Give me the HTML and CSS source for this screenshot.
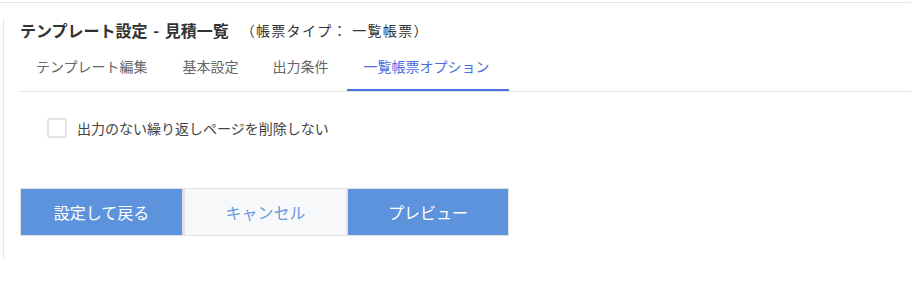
FILE: index.html
```html
<!DOCTYPE html>
<html lang="ja">
<head>
<meta charset="utf-8">
<link rel="stylesheet" href="styles.css">
</head>
<body>
<div class="topline"></div>
<div class="panel">
  <div class="title-row">
    <span class="title">テンプレート設定 - 見積一覧</span>
    <span class="subtitle">（帳票タイプ： 一覧帳票）</span>
  </div>
  <div class="tabs">
    <div class="tab">テンプレート編集</div>
    <div class="tab">基本設定</div>
    <div class="tab">出力条件</div>
    <div class="tab active">一覧帳票オプション</div>
  </div>
  <label class="check-row">
    <span class="checkbox"></span>
    <span class="check-label">出力のない繰り返しページを削除しない</span>
  </label>
  <div class="buttons">
    <button class="btn primary">設定して戻る</button>
    <button class="btn secondary">キャンセル</button>
    <button class="btn primary narrow">プレビュー</button>
  </div>
</div>
</body>
</html>
```

FILE: styles.css
```css
html, body {
  margin: 0;
  padding: 0;
  background: #ffffff;
}
body {
  font-family: "Noto Sans CJK JP", "Noto Sans", sans-serif;
  color: #333333;
}
.topline {
  margin-top: 2px;
  height: 0;
  border-top: 1px solid #e6e6e6;
}
.panel {
  margin-top: 15px;
  margin-left: 3px;
  border-left: 1px solid #e6e6e6;
  padding: 0 0 23px 16px;
}
.title-row {
  display: flex;
  align-items: center;
  height: 24px;
}
.title {
  font-size: 16px;
  font-weight: 700;
  color: #333333;
  line-height: 24px;
  word-spacing: 2px;
}
.subtitle {
  font-size: 14px;
  letter-spacing: 1.3px;
  margin-left: 12px;
  color: #333333;
  line-height: 24px;
}
.tabs {
  display: flex;
  border-bottom: 1px solid #e2e2e2;
}
.tab {
  font-size: 14px;
  line-height: 20px;
  padding: 14px 18px 13px 16px;
  border-bottom: 2px solid transparent;
  color: #666666;
}
.tab:first-child {
  padding-right: 19px;
}
.tab.active {
  color: #4a6ee0;
  border-bottom-color: #4a72e0;
  padding-left: 17px;
  padding-right: 19px;
}
.check-row {
  display: flex;
  align-items: center;
  margin: 26px 0 0 27px;
  height: 20px;
}
.checkbox {
  box-sizing: border-box;
  width: 20px;
  height: 20px;
  border: 2px solid #e4e4e4;
  border-radius: 2px;
  background: #fff;
}
.check-label {
  margin-left: 10px;
  font-size: 14px;
  color: #444444;
}
.buttons {
  display: flex;
  margin-top: 50px;
}
.btn {
  box-sizing: border-box;
  width: 163px;
  height: 48px;
  font-family: "Noto Sans CJK JP", "Noto Sans", sans-serif;
  font-size: 16px;
  border: 1px solid #e2e2e2;
  padding: 0;
  margin: 0;
}
.btn.primary {
  background: #5c93dc;
  color: #ffffff;
}
.btn.secondary {
  width: 164px;
  background: #f7f8fa;
  color: #6a98dc;
  border-left: 2px solid #e2e2e2;
}
.btn.narrow {
  width: 162px;
}
```
